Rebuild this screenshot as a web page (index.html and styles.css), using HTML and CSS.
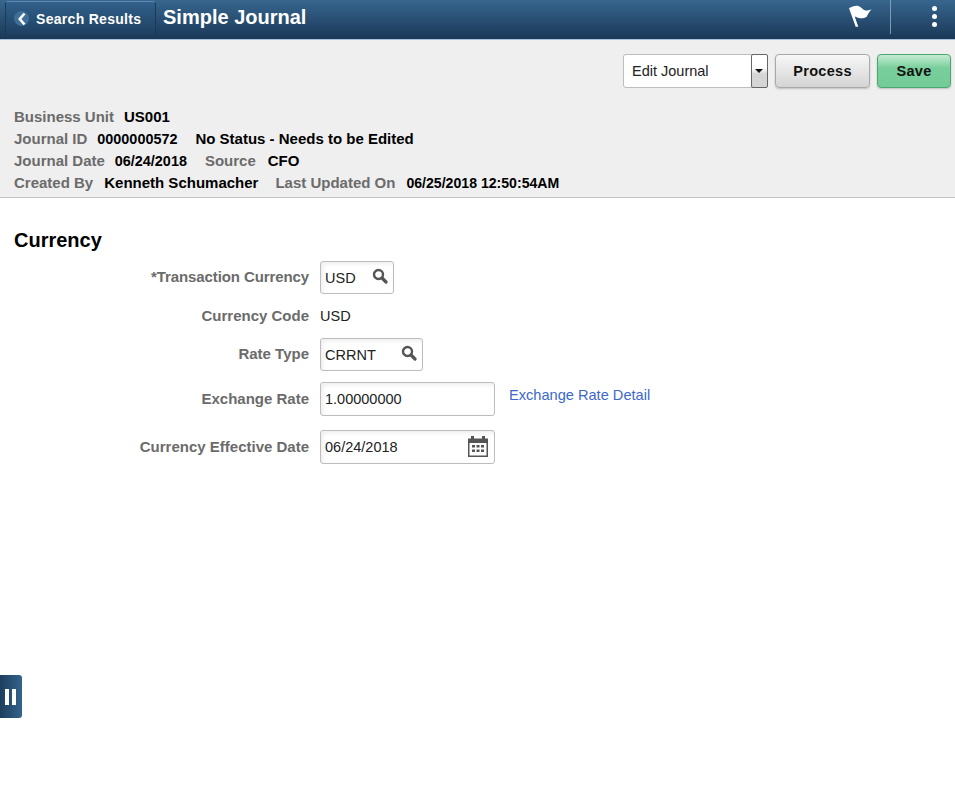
FILE: index.html
```html
<!DOCTYPE html>
<html lang="en">
<head>
<meta charset="utf-8">
<title>Simple Journal</title>
<link rel="stylesheet" href="styles.css">
</head>
<body>
<header class="banner">
  <a class="back">
    <span class="back-icon"><svg width="10" height="14" viewBox="0 0 10 14"><path d="M7.500 1.500 2.800 7l4.700 5.500" fill="none" stroke="#fff" stroke-width="2.600"/></svg></span>
    <span>Search Results</span>
  </a>
  <h1 class="title">Simple Journal</h1>
  <span class="flag"><svg width="26" height="27" viewBox="0 0 26 27"><path d="M3 6.300C6 4.500 9 3.500 12.300 4c2.500.5 4 3.500 7 4.500 2 .3 4.500-.5 6.400-1.200-2 2-3.500 4.500-5 7.400-3 1.800-6 2-8.700 1.100-1-.3-2.500-1.100-3.300-1.200l3.600 10.100H9.700z" fill="#fff"/></svg></span>
  <span class="divider"></span>
  <span class="dots"><i></i><i></i><i></i></span>
</header>
<section class="summary">
  <div class="actions">
    <div class="select"><span class="select-text">Edit Journal</span><span class="select-arrow"></span></div>
    <button class="btn">Process</button>
    <button class="btn btn-save">Save</button>
  </div>
  <div class="meta">
    <div class="meta-row"><span class="lbl">Business Unit</span><b class="val gap-10">US001</b></div>
    <div class="meta-row"><span class="lbl">Journal ID</span><b class="val num gap-10">0000000572</b><b class="val gap-18">No Status - Needs to be Edited</b></div>
    <div class="meta-row"><span class="lbl">Journal Date</span><b class="val num gap-10">06/24/2018</b><span class="lbl gap-18">Source</span><b class="val gap-12">CFO</b></div>
    <div class="meta-row"><span class="lbl">Created By</span><b class="val gap-11">Kenneth Schumacher</b><span class="lbl gap-17">Last Updated On</span><b class="val stamp gap-11">06/25/2018 12:50:54AM</b></div>
  </div>
</section>
<main class="content">
  <h2 class="heading">Currency</h2>
  <div class="form">
    <div class="row row-a"><label class="flabel tight">*Transaction Currency</label><div class="input w-74"><span>USD</span><svg class="ico" width="16" height="16" viewBox="0 0 16 16"><circle cx="6.500" cy="6.500" r="4.500" fill="none" stroke="#555" stroke-width="2.400"/><path d="m10 10 4 4" stroke="#555" stroke-width="3.200" stroke-linecap="round"/></svg></div></div>
    <div class="row row-b"><label class="flabel">Currency Code</label><span class="plain">USD</span></div>
    <div class="row row-c"><label class="flabel">Rate Type</label><div class="input w-103"><span>CRRNT</span><svg class="ico" width="16" height="16" viewBox="0 0 16 16"><circle cx="6.500" cy="6.500" r="4.500" fill="none" stroke="#555" stroke-width="2.400"/><path d="m10 10 4 4" stroke="#555" stroke-width="3.200" stroke-linecap="round"/></svg></div></div>
    <div class="row row-d"><label class="flabel">Exchange Rate</label><div class="input w-175"><span>1.00000000</span></div><a class="link">Exchange Rate Detail</a></div>
    <div class="row row-e"><label class="flabel">Currency Effective Date</label><div class="input w-175"><span>06/24/2018</span><svg class="ico-cal" width="20" height="21" viewBox="0 0 20 21"><path fill="#555" d="M0 2.500h3V0h3v2.500h8V0h3v2.500h3V21H0zM1.500 7v12.500h17V7z"/><path fill="#555" d="M4 9h3v2.500H4zM8.500 9h3v2.500h-3zM13 9h3v2.500h-3zM4 13.500h3V16H4zM8.500 13.500h3V16h-3zM13 13.500h3V16h-3z"/></svg></div></div>
  </div>
</main>
<div class="pause"><i></i><i></i></div>
</body>
</html>
```
FILE: styles.css
```css
* { box-sizing: border-box; }
html, body { margin: 0; padding: 0; }
body {
  width: 955px;
  height: 789px;
  overflow: hidden;
  background: #fff;
  font-family: "Liberation Sans", Arial, sans-serif;
  font-size: 14.500px;
  color: #000;
  position: relative;
}
.banner {
  height: 40px;
  display: flex;
  align-items: flex-start;
  background: linear-gradient(#37668e, #1a3857);
  border-bottom: 1px solid #a9c3dc;
  color: #fff;
  padding-left: 5px;
}
.back {
  margin-top: 1px;
  width: 151px;
  height: 35px;
  display: flex;
  align-items: center;
  gap: 7px;
  padding-left: 8px;
  border: 1px solid #1b3a58;
  border-top-color: #5c8ab2;
  border-radius: 4px;
  background: linear-gradient(#31608a, #1e4061);
  font-size: 14px;
  font-weight: bold;
  letter-spacing: .3px;
}
.back-icon {
  width: 15px;
  height: 15px;
  border-radius: 50%;
  background: #3f6f98;
  display: flex;
  align-items: center;
  justify-content: center;
}
.title {
  margin: 6px 0 0 7px;
  font-size: 20px;
  line-height: 22px;
  font-weight: bold;
  flex: 1;
}
.flag { margin-top: 2px; width: 26px; height: 27px; }
.divider { margin: 0 0 0 18px; width: 1px; height: 34px; background: #7f9bb4; }
.dots {
  margin: 6px 16px 0 40px;
  width: 8px;
  display: flex;
  flex-direction: column;
  gap: 3px;
}
.dots i { width: 5px; height: 5px; margin-left: 1px; border-radius: 50%; background: #fff; }
.summary {
  height: 158px;
  background: #efefef;
  border-bottom: 1px solid #c4c4c4;
  padding: 14px 4px 0 14px;
}
.actions { display: flex; justify-content: flex-end; gap: 7px; height: 34px; }
.select {
  width: 145px;
  height: 34px;
  display: flex;
  background: #fff;
  border: 1px solid #bdbdbd;
  border-radius: 3px;
}
.select-text { flex: 1; padding: 8px 0 0 8px; line-height: 16px; color: #222; }
.select-arrow {
  width: 17px;
  height: 34px;
  margin: -1px -1px -1px 0;
  border: 1px solid #666;
  border-radius: 2px;
  background: linear-gradient(#fff, #fff 40%, #d5d5d5 60%, #d5d5d5);
  position: relative;
}
.select-arrow::after {
  content: "";
  position: absolute;
  left: 3px;
  top: 14px;
  border: 4px solid transparent;
  border-top: 4px solid #111;
  border-bottom: 0;
}
.btn {
  height: 34px;
  width: 95px;
  padding: 0;
  font-family: inherit;
  font-size: 14.500px;
  font-weight: bold;
  letter-spacing: .3px;
  color: #111;
  background: linear-gradient(#f7f7f7, #d4d4d4);
  border: 1px solid #a9a9a9;
  border-radius: 4px;
  box-shadow: 0 1px 2px rgba(0,0,0,.2);
}
.btn-save {
  width: 74px;
  background: linear-gradient(#c6ecd4, #79cf9c 40%, #73cb98);
  border-color: #4ba873;
}
.meta { margin-top: 18px; font-size: 15px; }
.meta-row { height: 22px; line-height: 22px; white-space: nowrap; display: flex; }
.lbl { color: #6b6b6b; font-weight: bold; }
.val { color: #000; font-weight: bold; }
.num { font-size: 14.400px; }
.stamp { font-size: 14.100px; }
.gap-10 { margin-left: 10px; }
.gap-11 { margin-left: 11px; }
.gap-12 { margin-left: 12px; }
.gap-17 { margin-left: 17px; }
.gap-18 { margin-left: 18px; }
.content { padding: 30px 0 0 14px; }
.heading { margin: 0; font-size: 20px; line-height: 24px; font-weight: bold; }
.form { margin-top: 9px; margin-left: -14px; }
.row { display: flex; align-items: center; }
.row-a { height: 33px; }
.row-b { height: 20px; margin-top: 12px; }
.row-c { height: 33px; margin-top: 12px; }
.row-d { height: 34px; margin-top: 11px; }
.row-e { height: 34px; margin-top: 14px; }
.flabel {
  width: 309px;
  padding-bottom: 2px;
  text-align: right;
  color: #6b6b6b;
  font-weight: bold;
  font-size: 15px;
  flex: none;
}
.tight { letter-spacing: -.1px; }
.plain { margin-left: 11px; color: #222; }
.input {
  position: relative;
  margin-left: 11px;
  height: 100%;
  display: flex;
  align-items: center;
  padding-left: 4px;
  border: 1px solid #bdbdbd;
  border-radius: 3px;
  box-shadow: inset 2px 2px 4px rgba(0,0,0,.07);
  color: #222;
  background: #fff;
}
.w-74 { width: 74px; }
.w-103 { width: 103px; }
.w-175 { width: 175px; }
.ico { position: absolute; right: 5px; top: 6px; }
.ico-cal { position: absolute; right: 6px; top: 5px; }
.link { margin: -8px 0 0 14px; color: #3e68c8; font-size: 14.600px; }
.pause {
  position: absolute;
  left: 0;
  top: 675px;
  width: 22px;
  height: 43px;
  display: flex;
  align-items: center;
  justify-content: center;
  gap: 3px;
  padding-right: 2px;
  background: linear-gradient(90deg, #1d3e5e, #34638b);
  border-radius: 0 3px 3px 0;
}
.pause i { width: 4px; height: 16px; background: #fff; }
```
